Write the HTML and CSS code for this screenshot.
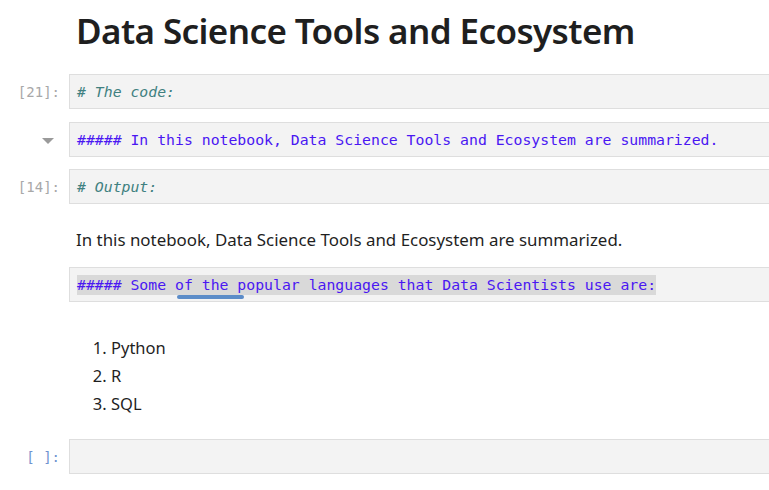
FILE: index.html
```html
<!DOCTYPE html>
<html>
<head>
<meta charset="utf-8">
<link rel="stylesheet" href="styles.css">
</head>
<body>
<div class="nb">
  <div class="row head-row">
    <div class="prompt"></div>
    <h1 class="title">Data Science Tools and Ecosystem</h1>
  </div>

  <div class="row r1">
    <div class="prompt gray">[21]:</div>
    <div class="cell"><span class="comment"># The code:</span></div>
  </div>

  <div class="row r2">
    <div class="prompt"><span class="caret"></span></div>
    <div class="cell"><span class="md">##### In this notebook, Data Science Tools and Ecosystem are summarized.</span></div>
  </div>

  <div class="row r3">
    <div class="prompt gray">[14]:</div>
    <div class="cell"><span class="comment"># Output:</span></div>
  </div>

  <div class="row r-out">
    <div class="prompt"></div>
    <p class="output">In this notebook, Data Science Tools and Ecosystem are summarized.</p>
  </div>

  <div class="row r4">
    <div class="prompt"></div>
    <div class="cell"><span class="md sel">##### Some <span class="spell">of the</span> popular languages that Data Scientists use are:</span></div>
  </div>

  <div class="row r-list">
    <div class="prompt"></div>
    <ol class="langs">
      <li>Python</li>
      <li>R</li>
      <li>SQL</li>
    </ol>
  </div>

  <div class="row r5">
    <div class="prompt blue">[ ]:</div>
    <div class="cell"></div>
  </div>
</div>
</body>
</html>
```

FILE: styles.css
```css
html, body {
  margin: 0;
  padding: 0;
  background: #ffffff;
  overflow: hidden;
}

.nb {
  display: flex;
  flex-direction: column;
}

.row {
  display: flex;
  align-items: center;
}

.prompt {
  width: 69px;
  flex: none;
  box-sizing: border-box;
  padding-right: 9px;
  text-align: right;
  font-family: "DejaVu Sans Mono", monospace;
  font-size: 14px;
}

.gray { color: #a8a8a8; }
.blue { color: #6f93cf; }

.head-row {
  height: 60px;
}

.title {
  margin: 0 0 0 7px;
  font-family: "Noto Sans", sans-serif;
  font-weight: 600;
  font-size: 35px;
  color: #1f1f1f;
  letter-spacing: -0.6px;
}

.cell {
  flex: 1;
  height: 35px;
  box-sizing: border-box;
  background: #f3f3f3;
  border: 1px solid #dedede;
  border-right: none;
  padding: 0 7px;
  display: flex;
  align-items: center;
  font-family: "DejaVu Sans Mono", monospace;
  font-size: 14.8px;
  white-space: pre;
}

.r1 { margin-top: 14px; }
.r2 { margin-top: 13px; }
.r3 { margin-top: 12px; }
.r4 { margin-top: 0; }
.r5 { margin-top: 21px; }

.comment {
  color: #408080;
  font-style: italic;
}

.md {
  color: #4a17f2;
}

.sel {
  background: #d9d9d9;
  position: relative;
  padding: 1px 0 2px;
}

.spell {
  position: relative;
}

.spell::after {
  content: "";
  position: absolute;
  left: 2px;
  right: -16px;
  bottom: -6px;
  height: 4px;
  border-radius: 2px;
  background: #5b8cc8;
}

.caret {
  display: inline-block;
  width: 0;
  height: 0;
  border-left: 6px solid transparent;
  border-right: 6px solid transparent;
  border-top: 6px solid #9a9a9a;
  margin-right: 6px;
  vertical-align: middle;
}

.r-out {
  height: 63px;
  align-items: flex-start;
}

.output {
  margin: 24px 0 0 7px;
  font-family: "Noto Sans", sans-serif;
  font-size: 16.9px;
  line-height: 24px;
  color: #1f1f1f;
}

.r-list {
  align-items: flex-start;
}

.langs {
  margin: 32px 0 0 0;
  padding-left: 42px;
  font-family: "Noto Sans", sans-serif;
  font-size: 16.5px;
  color: #1f1f1f;
  line-height: 28px;
}
```
